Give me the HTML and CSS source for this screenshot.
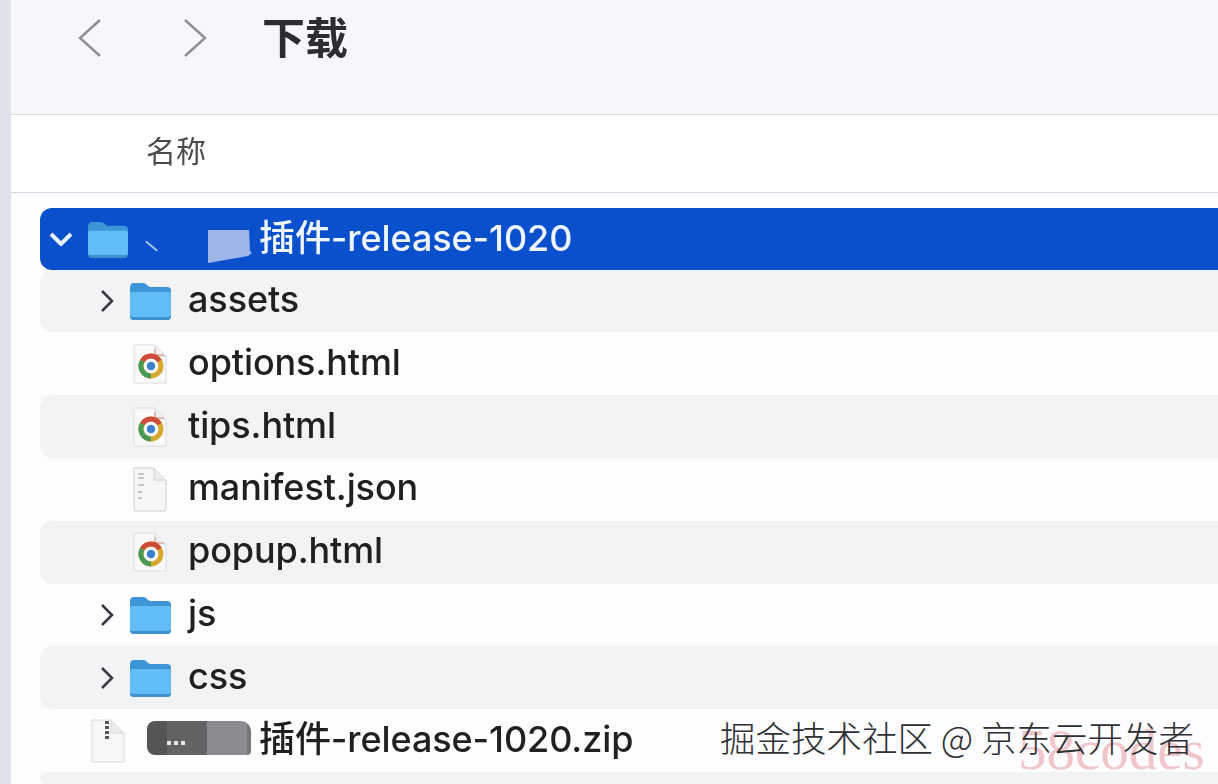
FILE: index.html
```html
<!DOCTYPE html>
<html>
<head>
<meta charset="utf-8">
<title>下载</title>
<link rel="stylesheet" href="styles.css">
</head>
<body>
<!-- shared icons -->
<svg class="defs" width="0" height="0">
  <defs>
    <g id="folder">
      <path d="M1 8 Q1 3 5 3 H14 Q17 3 19 6 Q20 7 22 7 H38 Q42 7 42 11 V36 Q42 40 38 40 H5 Q1 40 1 36 Z" fill="#3d94d6"/>
      <path d="M1 14 Q1 12 3 12 H40 Q42 12 42 14 V35 Q42 37 40 37 H3 Q1 37 1 35 Z" fill="#62bdf6"/>
      <path d="M1 35 Q1 37 3 37 H40 Q42 37 42 35 V36 Q42 40 38 40 H5 Q1 40 1 36 Z" fill="#3f90cf"/>
    </g>
    <g id="chrome">
      <path d="M1 1 H22 L33 12 V39 H1 Z" fill="#f9f9fa" stroke="#dcdcdf"/>
      <path d="M22 1 V12 H33" fill="#f0f0f2" stroke="#d8d8da"/>
      <path d="M22 5 V11 H31" fill="none" stroke="#d8907f" stroke-width="1"/>
      <circle cx="18" cy="22" r="10" fill="none" stroke="#d8a92f" stroke-width="5"/>
      <path d="M9.3 17 A10 10 0 0 1 26.5 17" fill="none" stroke="#cc4b3a" stroke-width="5"/>
      <path d="M9.3 17 A10 10 0 0 0 18 32" fill="none" stroke="#4a9a56" stroke-width="5"/>
      <circle cx="18" cy="22" r="5" fill="#3f7fd0" stroke="#fff" stroke-width="1.5"/>
    </g>
  </defs>
</svg>

<div class="window">
  <div class="side-strip"></div>
  <div class="finder">
    <header class="toolbar">
      <svg class="nav-arrow" width="24" height="40" viewBox="0 0 24 40"><path d="M22 2 L2 20 L22 38"/></svg>
      <svg class="nav-arrow nav-next" width="24" height="40" viewBox="0 0 24 40"><path d="M2 2 L22 20 L2 38"/></svg>
      <h1 class="title">下载</h1>
    </header>
    <div class="col-head">名称</div>
    <div class="list">
      <div class="row selected">
        <svg class="chev-open" width="24" height="14" viewBox="0 0 24 14"><path d="M2 2 L12 12 L22 2"/></svg>
        <svg class="ico-folder-sel" width="42" height="40" viewBox="0 0 43 41"><use href="#folder"/></svg>
        <span class="tick"></span>
        <svg class="blot-blue" width="44" height="34" viewBox="0 0 44 34"><path d="M0 1 H41 L42 22 L44 24 L40 27 L0 34 Z"/></svg>
        <span class="name">插件-release-1020</span>
      </div>
      <div class="row striped child">
        <svg class="chev" width="14" height="24" viewBox="0 0 14 24"><path d="M2 2 L12 12 L2 22"/></svg>
        <svg class="ico-folder" width="43" height="41" viewBox="0 0 43 41"><use href="#folder"/></svg>
        <span class="name">assets</span>
      </div>
      <div class="row child">
        <span class="chev-gap"></span>
        <svg class="ico-file" width="34" height="40" viewBox="0 0 34 40"><use href="#chrome"/></svg>
        <span class="name">options.html</span>
      </div>
      <div class="row striped child">
        <span class="chev-gap"></span>
        <svg class="ico-file" width="34" height="40" viewBox="0 0 34 40"><use href="#chrome"/></svg>
        <span class="name">tips.html</span>
      </div>
      <div class="row child">
        <span class="chev-gap"></span>
        <svg class="ico-file" width="34" height="45" viewBox="0 0 34 45">
          <path d="M1 1 H21 L33 13 V42 Q33 44 31 44 H3 Q1 44 1 42 Z" fill="#f6f6f7" stroke="#cfd0d3"/>
          <path d="M21 1 V13 H33" fill="#ededef" stroke="#cfd0d3"/>
          <path d="M5 7 H11 M5 11 H11 M5 18 H11 M5 25 H9 M5 31 H9" stroke="#c4c5c9" stroke-width="2"/>
        </svg>
        <span class="name">manifest.json</span>
      </div>
      <div class="row striped child">
        <span class="chev-gap"></span>
        <svg class="ico-file" width="34" height="40" viewBox="0 0 34 40"><use href="#chrome"/></svg>
        <span class="name">popup.html</span>
      </div>
      <div class="row child">
        <svg class="chev" width="14" height="24" viewBox="0 0 14 24"><path d="M2 2 L12 12 L2 22"/></svg>
        <svg class="ico-folder" width="43" height="41" viewBox="0 0 43 41"><use href="#folder"/></svg>
        <span class="name">js</span>
      </div>
      <div class="row striped child">
        <svg class="chev" width="14" height="24" viewBox="0 0 14 24"><path d="M2 2 L12 12 L2 22"/></svg>
        <svg class="ico-folder" width="43" height="41" viewBox="0 0 43 41"><use href="#folder"/></svg>
        <span class="name">css</span>
      </div>
      <div class="row zip">
        <svg class="ico-zip" width="34" height="44" viewBox="0 0 34 44">
          <path d="M1 1 H20 L33 14 V42 Q33 43 32 43 H2 Q1 43 1 42 Z" fill="#f7f7f8" stroke="#dcdcdf"/>
          <path d="M20 1 V14 H33" fill="#ececee" stroke="#d8d8db"/>
          <path d="M16 2 V22" stroke="#55565a" stroke-width="4" stroke-dasharray="3 2"/>
        </svg>
        <span class="blot-dark"><i></i><i></i><i></i></span>
        <span class="name">插件-release-1020.zip</span>
      </div>
      <div class="row striped last"></div>
    </div>
  </div>
</div>

<!-- watermarks sit over the list -->
<div class="mark-site">58codes</div>
<div class="mark-juejin">掘金技术社区 @ 京东云开发者</div>
</body>
</html>
```

FILE: styles.css
```css
body {
  margin: 0;
  width: 1218px;
  height: 784px;
  overflow: hidden;
  position: relative;
  background: #fff;
  font-family: Inter, "Noto Sans CJK SC", sans-serif;
  color: #1f2022;
}

.defs {
  position: absolute;
}

.window {
  display: flex;
  height: 784px;
  filter: blur(0.5px);
}

.side-strip {
  width: 11px;
  flex: none;
  background: #dfe2e8;
}

.finder {
  flex: 1;
  min-width: 0;
  background: #fdfdff;
}

.toolbar {
  height: 115px;
  box-sizing: border-box;
  display: flex;
  align-items: flex-start;
  padding: 18px 0 0 67px;
  background: #f5f7fb;
  border-bottom: 1px solid #d9dbdf;
}

.nav-arrow {
  fill: none;
  stroke: #8e8f93;
  stroke-width: 2.4;
  margin-right: 81px;
}

.nav-next {
  margin-right: 55px;
}

.title {
  margin: -7px 0 0;
  font-size: 43px;
  line-height: 48px;
  font-weight: 700;
  color: #2c2d30;
  font-family: "Noto Sans CJK SC", sans-serif;
}

.col-head {
  height: 78px;
  box-sizing: border-box;
  padding: 14px 0 0 135px;
  font-size: 30px;
  line-height: 40px;
  color: #4b4c50;
  background: #fff;
  border-bottom: 1px solid #d5d8dc;
  font-family: "Noto Sans CJK SC", sans-serif;
}

.list {
  padding: 15px 0 0 29px;
}

.row {
  height: 62.8px;
  display: flex;
  align-items: center;
  box-sizing: border-box;
  font-size: 36px;
  border-radius: 12px 0 0 12px;
  position: relative;
}

.striped {
  background: #f2f3f4;
}

.selected {
  height: 61.6px;
  background: #0a50cd;
  color: #eef5ff;
  padding-left: 9px;
}

.selected .name {
  font-weight: 500;
  margin-top: -8px;
}

.child {
  padding-left: 60px;
}

.chev-open {
  fill: none;
  stroke: #e6f0ff;
  stroke-width: 4;
  flex: none;
  margin-right: 14px;
}

.chev {
  fill: none;
  stroke: #3a3b3e;
  stroke-width: 2.6;
  flex: none;
  margin-right: 15px;
}

.chev-gap {
  width: 14px;
  flex: none;
  margin-right: 19px;
}

.ico-folder-sel {
  flex: none;
  margin-right: 15px;
}

.ico-folder {
  flex: none;
  margin-right: 16px;
}

.ico-file {
  flex: none;
  margin-right: 21px;
}

.tick {
  width: 15px;
  height: 2px;
  margin-right: 49px;
  flex: none;
  background: #9fc2f0;
  transform: rotate(40deg);
  margin-top: 14px;
}

.blot-blue {
  flex: none;
  margin-right: 7px;
  margin-top: 14px;
  fill: #9db6e8;
}

.name {
  white-space: nowrap;
  font-weight: 500;
  letter-spacing: -0.1px;
  margin-top: -4px;
}

.zip {
  padding-left: 51px;
}

.zip .name {
  margin-top: -9px;
}

.ico-zip {
  flex: none;
  margin-right: 22px;
}

.blot-dark {
  width: 104px;
  height: 34px;
  flex: none;
  margin-right: 8px;
  margin-top: -6px;
  border-radius: 8px 10px 4px 8px;
  background: linear-gradient(90deg, #555558 0 20px, #636366 20px 60px, #8c8c90 60px 100px, #77777a 100px);
  display: flex;
  gap: 3px;
  align-items: center;
  padding: 10px 0 0 20px;
  box-sizing: border-box;
}

.blot-dark i {
  width: 4px;
  height: 4px;
  background: #e8e8e8;
}

.last {
  height: 12px;
}

.mark-juejin {
  position: absolute;
  left: 720px;
  top: 716px;
  font-size: 35.5px;
  line-height: 42px;
  white-space: nowrap;
  color: #2f3033;
  font-family: "Noto Sans CJK SC", sans-serif;
  font-weight: 300;
}

.mark-site {
  position: absolute;
  left: 1018px;
  top: 720px;
  font-size: 57px;
  line-height: 60px;
  color: rgba(226, 130, 140, 0.45);
  font-family: "Liberation Serif", serif;
  white-space: nowrap;
}
```
